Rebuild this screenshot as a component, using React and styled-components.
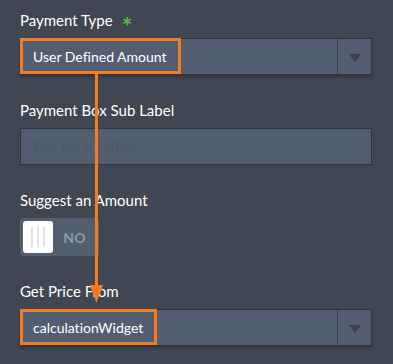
import React from 'react';
import styled, { createGlobalStyle } from 'styled-components';

const GlobalStyle = createGlobalStyle`
  html, body {
    margin: 0;
    padding: 0;
    background: #404652;
  }
  body {
    font-family: 'Lato', 'Noto Sans', sans-serif;
    font-variant-ligatures: none;
  }
`;

const Panel = styled.div`
  position: relative;
  width: 393px;
  height: 364px;
  box-sizing: border-box;
  padding: 10px 21px 0 20px;
  background: #404652;
  display: flex;
  flex-direction: column;
  gap: 25px;
  overflow: hidden;
`;

const Field = styled.div`
  display: flex;
  flex-direction: column;
`;

const Label = styled.div`
  font-size: 15px;
  line-height: 20px;
  color: #ffffff;
  margin-bottom: 8px;
  display: flex;
  align-items: center;
  white-space: nowrap;
`;

const Required = styled.span`
  color: #5bb84a;
  font-size: 25px;
  font-weight: 700;
  margin-left: 9px;
  line-height: 20px;
  position: relative;
  top: 6px;
`;

const SelectBox = styled.div`
  height: 37px;
  box-sizing: border-box;
  display: flex;
  background: #535e70;
  border: 1px solid #2f353f;
  box-shadow: 0 2px 3px rgba(0, 0, 0, 0.25);
`;

const SelectValue = styled.div`
  flex: 1;
  display: flex;
  align-items: center;
`;

const Highlight = styled.div`
  height: 36px;
  margin: -1px 0 0 -1px;
  box-sizing: border-box;
  border: 3px solid #f47c20;
  padding: 0 11px 0 10px;
  display: flex;
  align-items: center;
  font-size: 14px;
  color: #ffffff;
  white-space: nowrap;
`;

const Caret = styled.div`
  width: 33px;
  border-left: 1px solid #3a414c;
  display: flex;
  align-items: center;
  justify-content: center;
  &::after {
    content: '';
    border-left: 6px solid transparent;
    border-right: 6px solid transparent;
    border-top: 8px solid #3b424d;
    margin-top: 2px;
  }
`;

const TextInput = styled.div`
  height: 37px;
  box-sizing: border-box;
  background: #535e70;
  border: 1px solid #2f353f;
  padding: 0 12px;
  display: flex;
  align-items: center;
  font-size: 14.5px;
  color: #4f596a;
`;

const Toggle = styled.div`
  width: 79px;
  height: 38px;
  box-sizing: border-box;
  background: #535e70;
  border-radius: 4px;
  padding: 3px;
  display: flex;
  align-items: center;
`;

const Knob = styled.div`
  width: 30px;
  height: 32px;
  border-radius: 3px;
  background: #ffffff;
  display: flex;
  align-items: center;
  justify-content: center;
  gap: 4px;
  & span {
    width: 2px;
    height: 20px;
    background: #e3e3e3;
  }
`;

const ToggleText = styled.div`
  flex: 1;
  text-align: center;
  font-size: 14px;
  font-weight: 700;
  color: #8f99a8;
  letter-spacing: 0.3px;
`;

const Connector = styled.svg`
  position: absolute;
  left: 0;
  top: 0;
  pointer-events: none;
`;

export default function App() {
  return (
    <>
      <GlobalStyle />
      <Panel>
        <Field>
          <Label>
            Payment Type<Required>*</Required>
          </Label>
          <SelectBox>
            <SelectValue>
              <Highlight>User Defined Amount</Highlight>
            </SelectValue>
            <Caret />
          </SelectBox>
        </Field>
        <Field>
          <Label>Payment Box Sub Label</Label>
          <TextInput>Buy me a coffee</TextInput>
        </Field>
        <Field>
          <Label>Suggest an Amount</Label>
          <Toggle>
            <Knob>
              <span />
              <span />
              <span />
            </Knob>
            <ToggleText>NO</ToggleText>
          </Toggle>
        </Field>
        <Field>
          <Label>Get Price From</Label>
          <SelectBox>
            <SelectValue>
              <Highlight>calculationWidget</Highlight>
            </SelectValue>
            <Caret />
          </SelectBox>
        </Field>
        <Connector width="393" height="364">
          <line x1="96.5" y1="74" x2="96.5" y2="288" stroke="#f47c20" strokeWidth="3" />
          <polygon points="90,285 103,285 96.5,303" fill="#f47c20" />
        </Connector>
      </Panel>
    </>
  );
}
